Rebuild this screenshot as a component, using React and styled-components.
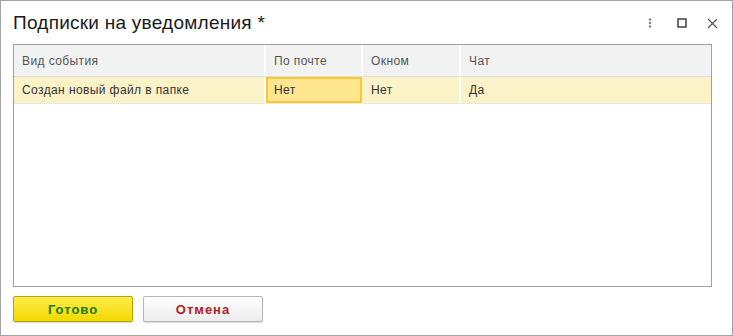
import React from "react";
import styled, { createGlobalStyle } from "styled-components";

const GlobalStyle = createGlobalStyle`
  * { box-sizing: border-box; }
  body {
    margin: 0;
    font-family: "Liberation Sans", Arial, sans-serif;
    background: #fff;
  }
`;

const Window = styled.div`
  width: 733px;
  height: 336px;
  border: 1px solid #a3a3a3;
  background: #fff;
  display: flex;
  flex-direction: column;
  padding: 0 20px 0 12px;
`;

const TitleBar = styled.div`
  height: 43px;
  display: flex;
  align-items: center;
  justify-content: space-between;
  padding-top: 1px;
`;

const Title = styled.h1`
  margin: 0;
  font-size: 19px;
  font-weight: normal;
  letter-spacing: 0.25px;
  color: #1a1a1a;
`;

const Controls = styled.div`
  display: flex;
  align-items: center;
  gap: 20px;
  margin-right: -6px;
  svg {
    display: block;
  }
  svg:first-child {
    margin-right: 5px;
  }
`;

const Grid = styled.div`
  height: 243px;
  border: 1px solid #a0a0a0;
  display: flex;
  flex-direction: column;
  color: #333;
  font-size: 12px;
  letter-spacing: 0.4px;
`;

const Row = styled.div`
  display: grid;
  grid-template-columns: 252px 97px 98px 1fr;
  height: ${(p) => (p.$head ? "32px" : "27px")};
  background: ${(p) => (p.$head ? "#f2f2f2" : "#fcf2c8")};
  border-bottom: 1px solid ${(p) => (p.$head ? "#dedede" : "#e8e8e8")};
`;

const Cell = styled.div`
  display: flex;
  align-items: center;
  padding-left: ${(p) => (p.$current ? "6px" : "8px")};
  color: ${(p) => (p.$head ? "#555" : "#333")};
  border-right: ${(p) => (p.$last ? "none" : "2px solid #fff")};
  ${(p) =>
    p.$current &&
    `
    background: #fde68f;
    border: 2px solid #f8ca30;
    margin: 0 1px 0 0;
  `}
`;

const Footer = styled.div`
  display: flex;
  gap: 10px;
  padding-top: 9px;
`;

const Button = styled.button`
  width: 120px;
  height: 26px;
  border-radius: 2px;
  font-family: "Liberation Sans", Arial, sans-serif;
  font-size: 13px;
  font-weight: bold;
  letter-spacing: 1px;
  cursor: pointer;
  border: 1px solid ${(p) => (p.$primary ? "#b8a200" : "#b5b5b5")};
  color: ${(p) => (p.$primary ? "#137a13" : "#b22222")};
  background: ${(p) =>
    p.$primary
      ? "linear-gradient(#ffeb4a, #f5d800)"
      : "linear-gradient(#ffffff, #ececec)"};
  box-shadow: 0 1px 1px rgba(0, 0, 0, 0.15);
`;

const columns = ["Вид события", "По почте", "Окном", "Чат"];
const row = ["Создан новый файл в папке", "Нет", "Нет", "Да"];

export default function App() {
  return (
    <>
      <GlobalStyle />
      <Window>
        <TitleBar>
          <Title>Подписки на уведомления *</Title>
          <Controls>
            <svg width="4" height="10" viewBox="0 0 4 10">
              <circle cx="2" cy="1.5" r="1.3" fill="#888" />
              <circle cx="2" cy="5" r="1.3" fill="#888" />
              <circle cx="2" cy="8.5" r="1.3" fill="#888" />
            </svg>
            <svg width="10" height="10" viewBox="0 0 10 10">
              <rect x="1" y="1" width="8" height="8" fill="none" stroke="#333" strokeWidth="1.4" />
            </svg>
            <svg width="11" height="11" viewBox="0 0 11 11">
              <path d="M1 1 L10 10 M10 1 L1 10" stroke="#555" strokeWidth="1.2" />
            </svg>
          </Controls>
        </TitleBar>
        <Grid>
          <Row $head>
            {columns.map((c, i) => (
              <Cell key={c} $head $last={i === columns.length - 1}>
                {c}
              </Cell>
            ))}
          </Row>
          <Row>
            {row.map((c, i) => (
              <Cell key={i} $current={i === 1} $last={i === row.length - 1}>
                {c}
              </Cell>
            ))}
          </Row>
        </Grid>
        <Footer>
          <Button $primary>Готово</Button>
          <Button>Отмена</Button>
        </Footer>
      </Window>
    </>
  );
}
